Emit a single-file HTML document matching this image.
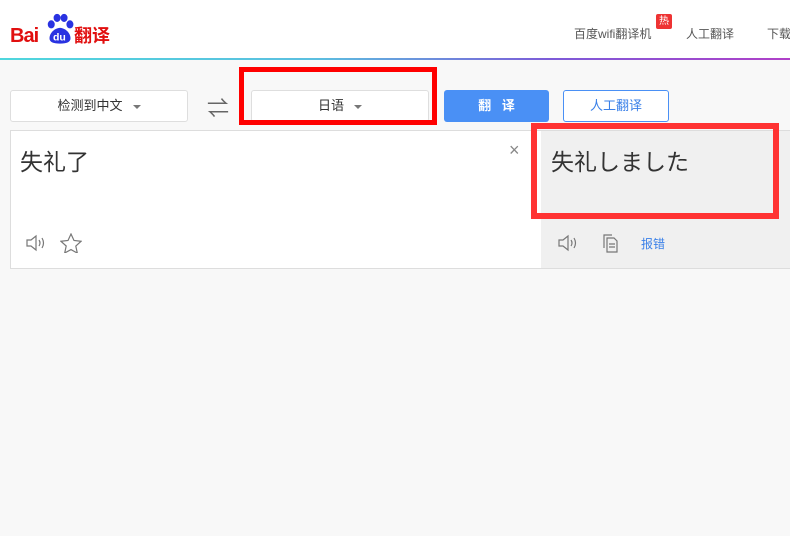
<!DOCTYPE html>
<html><head><meta charset="utf-8"><style>
*{margin:0;padding:0;box-sizing:border-box}
body{width:790px;height:536px;background:#f8f8f8;font-family:"Liberation Sans","Noto Sans CJK SC",sans-serif;position:relative;overflow:hidden}
.a{position:absolute;white-space:nowrap}
.hd{left:0;top:0;width:790px;height:59px;background:#fff}
.line{left:0;top:58px;width:790px;height:2px;background:linear-gradient(90deg,#4fd6dd,#5bbfe0 40%,#7d5ad8 70%,#b040c8)}
.sel{background:#fff;border:1px solid #dedede;border-radius:3px;height:32px;font-size:13px;color:#333;text-align:center;line-height:30px}
.tri{display:inline-block;width:0;height:0;border-left:4px solid transparent;border-right:4px solid transparent;border-top:4px solid #777;margin-left:10px;vertical-align:middle}
</style></head><body>
<div class="a hd"></div>
<div class="a line"></div>
<div class="a" style="left:10px;top:25px;font:bold 20px 'Liberation Sans',sans-serif;color:#e10f0f;letter-spacing:-1px">Bai</div>
<div class="a" style="left:46px;top:13px;width:28px;height:32px">
<svg width="28" height="32" viewBox="0 0 24 26"><g fill="#2932e1"><ellipse cx="4.5" cy="9" rx="3" ry="3.5"/><ellipse cx="9.5" cy="3.5" rx="3" ry="3.5"/><ellipse cx="15.5" cy="3.5" rx="3" ry="3.5"/><ellipse cx="20.5" cy="9" rx="3" ry="3.5"/><path d="M3 21c0-5 5-9 9-9s9 4 9 9c0 3-3 4.5-9 4.5s-9-1.5-9-4.5z"/></g><text x="6" y="23" font-size="9" fill="#fff" font-family="Liberation Sans" font-weight="bold">du</text></svg></div>
<div class="a" style="left:74px;top:24px;font:bold 18px 'Noto Sans CJK SC',sans-serif;color:#e10f0f;line-height:22px">翻译</div>
<div class="a" style="left:574px;top:25px;font-size:12px;color:#555">百度wifi翻译机</div>
<div class="a" style="left:656px;top:14px;width:16px;height:15px;background:#e33;color:#fff;font-size:10px;text-align:center;line-height:15px;border-radius:2px">热</div>
<div class="a" style="left:686px;top:25px;font-size:12px;color:#555">人工翻译</div>
<div class="a" style="left:767px;top:25px;font-size:12px;color:#555">下载</div>

<div class="a sel" style="left:10px;top:90px;width:178px">检测到中文<span class="tri"></span></div>
<div class="a" style="left:207px;top:91px;font-size:22px;color:#666">⇌</div>
<div class="a sel" style="left:251px;top:90px;width:178px">日语<span class="tri"></span></div>
<div class="a" style="left:239px;top:67px;width:198px;height:58px;border:5px solid #f00"></div>
<div class="a" style="left:444px;top:90px;width:105px;height:32px;background:#4a90f5;border-radius:3px;color:#fff;font-size:13px;text-align:center;line-height:32px;font-weight:bold">翻&nbsp;&nbsp;&nbsp;译</div>
<div class="a" style="left:563px;top:90px;width:106px;height:32px;background:#fff;border:1px solid #4a90f5;border-radius:3px;color:#3a80e8;font-size:13px;text-align:center;line-height:30px">人工翻译</div>

<div class="a" style="left:10px;top:130px;width:532px;height:139px;background:#fff;border:1px solid #ddd"></div>
<div class="a" style="left:541px;top:130px;width:249px;height:139px;background:#f0f0f0;border-top:1px solid #ddd;border-bottom:1px solid #ddd"></div>
<div class="a" style="left:20px;top:143px;font-size:23px;color:#333">失礼了</div>
<div class="a" style="left:509px;top:140px;font-size:18px;color:#888">×</div>
<div class="a" style="left:551px;top:143px;font-size:23px;color:#333">失礼しました</div>
<div class="a" style="left:531px;top:123px;width:248px;height:96px;border:6px solid #f33"></div>
<svg class="a" style="left:25px;top:234px" width="22" height="18" viewBox="0 0 22 18" fill="none" stroke="#777" stroke-width="1.2"><path d="M2 6h4l5-4v14l-5-4H2z"/><path d="M14 6q2 3 0 6M17 4q3 5 0 10"/></svg>
<svg class="a" style="left:60px;top:233px" width="22" height="20" viewBox="0 0 22 20" fill="none" stroke="#777" stroke-width="1.2"><path d="M11 1l3 6.5 7 .8-5.2 4.8 1.5 7L11 16.6 4.7 20l1.5-7L1 8.3l7-.8z"/></svg>
<svg class="a" style="left:557px;top:234px" width="22" height="18" viewBox="0 0 22 18" fill="none" stroke="#777" stroke-width="1.2"><path d="M2 6h4l5-4v14l-5-4H2z"/><path d="M14 6q2 3 0 6M17 4q3 5 0 10"/></svg>
<svg class="a" style="left:600px;top:233px" width="20" height="20" viewBox="0 0 20 20" fill="none" stroke="#777" stroke-width="1.2"><path d="M4 15V2h8"/><path d="M7 5h7l3 3v11H7z"/><path d="M9 11h6M9 14h6"/></svg>
<div class="a" style="left:641px;top:235px;font-size:12px;color:#3a80e8">报错</div>
</body></html>
